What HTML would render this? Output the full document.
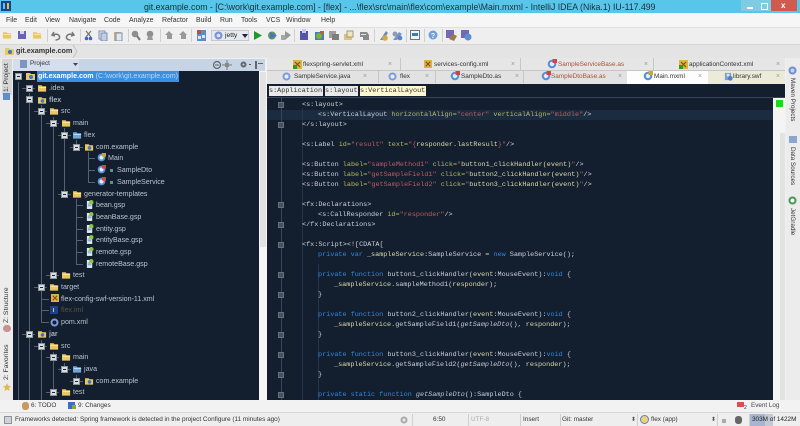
<!DOCTYPE html>
<html><head><meta charset="utf-8">
<style>
html,body{margin:0;padding:0;background:#f0f0f0}
#r{position:relative;width:800px;height:426px;overflow:hidden;background:#f0f0f0;font-family:"Liberation Sans",sans-serif;font-size:7px;color:#222;filter:blur(.3px)}
#r div,#r span.a,#r svg.i{position:absolute}
.t{white-space:pre;line-height:10px}
.m{top:16px;font-size:6.9px;color:#333}
.n{white-space:pre;color:#bcc5ce;font-size:7.1px;line-height:10px;height:10px}
.c{white-space:pre;font-family:"Liberation Mono",monospace;font-size:6.8px;line-height:10px;height:10px;color:#ccd3da;left:0}
.k{color:#2f8ae2}.a1{color:#b4b95c}.v{color:#bd5f5f}.y{color:#dcdcac}.it{font-style:italic;color:#c0c8d0}
.tab{font-size:6.4px;color:#333;white-space:pre;line-height:10px}
.red{color:#a9503c}
.x{color:#999;font-size:7px;line-height:10px}
.vl{background:#56606e;width:1px}
.hl{background:#56606e;height:1px}
.e{width:5px;height:5px;background:#d8dde2;border:1px solid #8a929c}
.e:after{content:"";position:absolute;left:1px;top:2px;width:3px;height:1px;background:#223}
.sp{background:#cfcfcf;width:1px;top:29px;height:13px}
.rot{white-space:pre;font-size:6.8px;color:#333;line-height:9px}
.rr{white-space:pre;font-size:6.3px;color:#333;line-height:9px}
.st{top:415px;font-size:6.4px;color:#333;white-space:pre;line-height:10px}
.sb{background:#cfcfcf;width:1px;top:414px;height:12px}
.fd{width:4px;height:4px;background:#46525f;border:1px solid #66717e}
</style></head><body>
<svg width="0" height="0" style="position:absolute">
<defs>
<symbol id="fo" viewBox="0 0 10 8"><path d="M0 1h4l1 1h4v6H0z" fill="#e9c765"/><path d="M1 3h8v1H1z" fill="#f7e9a8"/></symbol>
<symbol id="fb" viewBox="0 0 10 8"><path d="M0 1h4l1 1h4v6H0z" fill="#6fa8dc"/><path d="M1 3h8v1H1z" fill="#c6e0f6"/></symbol>
<symbol id="fp" viewBox="0 0 10 8"><path d="M0 1h4l1 1h4v6H0z" fill="#e9c765"/><circle cx="5" cy="5" r="2" fill="#3d77c4"/></symbol>
<symbol id="as" viewBox="0 0 10 10"><circle cx="5" cy="5" r="4.3" fill="#5a8fd8"/><circle cx="5" cy="5" r="2.2" fill="#e6eef8"/><rect x="5.5" y="0" width="4.5" height="4" fill="#c8484a"/></symbol>
<symbol id="am" viewBox="0 0 10 10"><circle cx="5" cy="5" r="4.3" fill="#5a8fd8"/><circle cx="5" cy="5" r="2.2" fill="#e6eef8"/><rect x="5.5" y="0" width="4.5" height="4" fill="#c9a63c"/></symbol>
<symbol id="gs" viewBox="0 0 9 10"><path d="M1 1h6v9H1z" fill="#dfeaf5"/><path d="M2 4h4v1H2zM2 6h4v1H2z" fill="#5b8cc0"/><circle cx="6" cy="2.5" r="2.5" fill="#8cc63f"/></symbol>
<symbol id="xm" viewBox="0 0 9 9"><rect width="9" height="9" fill="#d9b44a"/><path d="M2 2l5 5M7 2L2 7" stroke="#8a4a10" stroke-width="1.2"/></symbol>
<symbol id="bl" viewBox="0 0 10 10"><path d="M1 1h7v8H1z" fill="#7f9ed0"/><path d="M3 2h3v3H3z" fill="#d8e4f4"/><circle cx="7" cy="7" r="2.6" fill="#4f7fc0"/></symbol>
</defs></svg>
<div id="r">
<!-- title -->
<div style="left:0;top:0;width:800px;height:13px;background:#58c6ea"></div>
<div style="left:1px;top:1px;width:10px;height:10px;background:#1c3f8e"></div>
<div style="left:3px;top:3px;width:2px;height:6px;background:#58c6ea"></div>
<div style="left:7px;top:3px;width:2px;height:6px;background:#e8c040"></div>
<div class="t" style="left:144px;top:2px;font-size:8.73px;color:#1f2d33">git.example.com - [C:\work\git.example.com] - [flex] - ...\flex\src\main\flex\com\example\Main.mxml - IntelliJ IDEA (Nika.1) IU-117.499</div>
<div style="left:741px;top:0;width:17px;height:11px;background:#7fcbe4"></div>
<div style="left:747px;top:7px;width:6px;height:2px;background:#fff"></div>
<div style="left:758px;top:0;width:13px;height:11px;background:#7fcbe4"></div>
<div style="left:761px;top:3px;width:5px;height:5px;border:1px solid #fff"></div>
<div style="left:771px;top:0;width:26px;height:11px;background:#cf5a50"></div>
<div class="t" style="left:781px;top:1px;font-size:8px;font-weight:bold;color:#fff">x</div>
<!-- menu -->
<div style="left:0;top:13px;width:800px;height:14px;background:#f6f6f6"></div>
<div class="t m" style="left:6px">File</div><div class="t m" style="left:25px">Edit</div><div class="t m" style="left:45px">View</div><div class="t m" style="left:69px">Navigate</div><div class="t m" style="left:104px">Code</div><div class="t m" style="left:129px">Analyze</div><div class="t m" style="left:162px">Refactor</div><div class="t m" style="left:196px">Build</div><div class="t m" style="left:220px">Run</div><div class="t m" style="left:241px">Tools</div><div class="t m" style="left:266px">VCS</div><div class="t m" style="left:286px">Window</div><div class="t m" style="left:321px">Help</div>
<!-- toolbar -->
<div style="left:0;top:27px;width:800px;height:17px;background:#efefef;border-top:1px solid #e0e0e0;box-sizing:border-box"></div>
<svg class="i" style="left:3px;top:31px" width="9" height="8"><use href="#fo"/></svg>
<div style="left:18px;top:31px;width:8px;height:8px;background:#6a60b8"></div><div style="left:20px;top:31px;width:4px;height:3px;background:#d5d2ee"></div>
<svg class="i" style="left:33px;top:31px" width="9" height="8"><use href="#fo"/></svg>
<div class="sp" style="left:47px"></div>
<svg class="i" style="left:51px;top:30px" width="10" height="11"><path d="M3 2L1 5l3 1M1.500 5C6 3 9 5 8.500 8c-.3 1-2 2-4 2" fill="none" stroke="#777" stroke-width="1.500"/></svg>
<svg class="i" style="left:65px;top:30px" width="10" height="11"><path d="M7 2l2 3-3 1M8.500 5C4 3 1 5 1.500 8c.3 1 2 2 4 2" fill="none" stroke="#777" stroke-width="1.500"/></svg>
<div class="sp" style="left:80px"></div>
<svg class="i" style="left:84px;top:30px" width="9" height="11"><path d="M2 1l5 6M7 1L2 7" stroke="#777" stroke-width="1.300"/><circle cx="2.500" cy="8.500" r="1.800" fill="#4a63b8"/><circle cx="6.500" cy="8.500" r="1.800" fill="#4a63b8"/></svg>
<svg class="i" style="left:98px;top:30px" width="10" height="11"><path d="M1 1h6v8H1z" fill="#e9edf4" stroke="#7f8fb0"/><path d="M3 3h6v8H3z" fill="#bfcde8" stroke="#7f8fb0"/></svg>
<svg class="i" style="left:113px;top:30px" width="10" height="11"><path d="M1 2h7v9H1z" fill="#c9b27a"/><path d="M3 3h6v8H3z" fill="#dfe7f4" stroke="#7f8fb0"/></svg>
<div class="sp" style="left:128px"></div>
<svg class="i" style="left:131px;top:30px" width="10" height="11"><circle cx="4" cy="4" r="3.300" fill="#8f8f8f"/><path d="M6 6l3 4" stroke="#777" stroke-width="2"/></svg>
<svg class="i" style="left:145px;top:30px" width="10" height="11"><circle cx="5" cy="4" r="3.300" fill="#8f8f8f"/><path d="M2 10l1-4h4l1 4z" fill="#999"/></svg>
<div class="sp" style="left:160px"></div>
<svg class="i" style="left:164px;top:30px" width="10" height="10"><path d="M5 1L1 5h2v4h5V5h1z" fill="#999"/></svg>
<svg class="i" style="left:178px;top:30px" width="10" height="10"><path d="M5 1L1 5h2v4h5V5h1z" fill="#999"/></svg>
<div class="sp" style="left:191px"></div>
<div style="left:197px;top:30px;width:9px;height:11px;background:#5c8ccc"></div><div style="left:197px;top:30px;width:4px;height:4px;background:#c8483c"></div><div style="left:202px;top:35px;width:3px;height:3px;background:#dce7f4"></div><div style="left:198px;top:36px;width:3px;height:3px;background:#dce7f4"></div>
<div style="left:211px;top:30px;width:38px;height:11px;background:#e6e9ef;border:1px solid #c4c8d0;box-sizing:border-box"></div>
<svg class="i" style="left:214px;top:31px" width="9" height="9"><circle cx="4.500" cy="4.500" r="4" fill="#7d93d6"/><circle cx="4.500" cy="4.500" r="1.800" fill="#dfe5f6"/></svg>
<div class="t" style="left:225px;top:31px;font-size:6.700px">jetty</div>
<svg class="i" style="left:242px;top:34px" width="6" height="4"><path d="M0 0h6L3 4z" fill="#223"/></svg>
<svg class="i" style="left:254px;top:30px" width="8" height="11"><path d="M0 1l8 4.500L0 10z" fill="#1f9a2a"/></svg>
<svg class="i" style="left:267px;top:30px" width="11" height="11"><circle cx="5" cy="5.500" r="4" fill="#5f9e50"/><path d="M3 2l7 3.500L3 9z" fill="#4f74c4"/></svg>
<svg class="i" style="left:281px;top:30px" width="10" height="11"><path d="M0 5h4v5H0z" fill="#a8a8a8"/><path d="M4 1l6 4-6 5z" fill="#999"/></svg>
<div class="sp" style="left:294px"></div>
<div style="left:300px;top:31px;width:8px;height:9px;background:#5656a8"></div><div style="left:302px;top:29px;width:4px;height:4px;background:#c9c9e8"></div>
<svg class="i" style="left:314px;top:30px" width="11" height="11"><rect x="1" y="2" width="9" height="8" fill="#3f7fc8"/><circle cx="5" cy="6" r="3" fill="#82b030"/><rect x="6" y="1" width="4" height="3" fill="#c05c40"/></svg>
<div style="left:329px;top:31px;width:7px;height:7px;background:#9c9c9c"></div><div style="left:332px;top:34px;width:7px;height:6px;background:#7e7e7e"></div>
<svg class="i" style="left:344px;top:30px" width="10" height="11"><path d="M0 4h8v6H0z" fill="#d8c484"/><path d="M3 1h6v6H3z" fill="#efe6c0" stroke="#a69a70"/></svg>
<svg class="i" style="left:359px;top:30px" width="11" height="11"><path d="M1 2h7l2 3v5H4V7H1z" fill="#8a8a8a"/><path d="M2 4h5v1H2z" fill="#e0e0e0"/></svg>
<div class="sp" style="left:374px"></div>
<svg class="i" style="left:378px;top:30px" width="11" height="11"><path d="M2 10L8 1l2 2-5 7z" fill="#6f86b8"/><circle cx="7" cy="8" r="2.800" fill="#d9a83c"/></svg>
<svg class="i" style="left:392px;top:30px" width="11" height="11"><path d="M1 10L7 2l3 2-5 6z" fill="#7c92c4"/><circle cx="3" cy="4" r="2.500" fill="#8f9bb0"/><circle cx="8" cy="8" r="2.300" fill="#5a82c4"/></svg>
<div class="sp" style="left:406px"></div>
<div style="left:410px;top:30px;width:10px;height:10px;background:#f0f4f8;border:1px solid #6a7484;box-sizing:border-box"></div><div style="left:412px;top:33px;width:6px;height:3px;background:#2f7fb8"></div>
<div class="sp" style="left:424px"></div>
<svg class="i" style="left:428px;top:30px" width="10" height="10"><circle cx="5" cy="5" r="4.500" fill="#6fa0dc"/><text x="5" y="8" font-size="7" font-weight="bold" text-anchor="middle" fill="#fff" font-family="Liberation Sans">?</text></svg>
<div class="sp" style="left:442px"></div>
<svg class="i" style="left:446px;top:30px" width="11" height="11"><rect x="0" y="0" width="8" height="8" fill="#7268b4"/><path d="M3 9l4-5 4 2-3 5z" fill="#a07a44"/></svg>
<svg class="i" style="left:461px;top:30px" width="11" height="11"><rect x="0" y="0" width="8" height="8" fill="#7268b4"/><circle cx="7" cy="7" r="3.500" fill="#5a8ed0"/></svg>
<!-- nav -->
<div style="left:0;top:44px;width:800px;height:14px;background:#e4e4e4;border-top:1px solid #d6d6d6;box-sizing:border-box"></div>
<svg class="i" style="left:5px;top:47px" width="10" height="8"><use href="#fp"/></svg>
<div class="t" style="left:16px;top:46px;font-size:7.200px;font-weight:bold;color:#333">git.example.com</div>
<svg class="i" style="left:72px;top:45px" width="6" height="13"><path d="M1 0l4 6.500L1 13" fill="none" stroke="#c4c4c4"/></svg>
<!-- left stripe -->
<div style="left:0;top:58px;width:13px;height:342px;background:#ececec"></div>
<div style="left:2px;top:59px;width:10px;height:36px;background:#d6d6d6"></div>
<div class="rot" style="left:2px;top:63px;width:10px;height:30px"><span style="position:absolute;left:0;top:29px;transform:rotate(-90deg);transform-origin:0 0;">1: Project</span></div>
<div style="left:3px;top:93px;width:7px;height:7px;background:#5a8fd0"></div>
<div class="rot" style="left:2px;top:290px;width:10px;height:33px"><span style="position:absolute;left:0;top:33px;transform:rotate(-90deg);transform-origin:0 0;">Z: Structure</span></div>
<div style="left:3px;top:325px;width:8px;height:7px;background:#c89090;border-radius:4px"></div>
<div class="rot" style="left:2px;top:347px;width:10px;height:33px"><span style="position:absolute;left:0;top:33px;transform:rotate(-90deg);transform-origin:0 0;">2: Favorites</span></div>
<svg class="i" style="left:3px;top:383px" width="8" height="8"><path d="M4 0l1.200 2.800L8 3 6 5l.6 3L4 6.500 1.400 8 2 5 0 3l2.800-.2z" fill="#e0b85a"/></svg>
<!-- project panel header -->
<div style="left:13px;top:59px;width:252px;height:12px;background:#c6d4e6"></div>
<div style="left:13px;top:59px;width:66px;height:12px;background:#d5deea"></div>
<div style="left:20px;top:60px;width:7px;height:8px;background:#7b97bf"></div>
<div class="t" style="left:30px;top:59px;font-size:6.400px;color:#333">Project</div>
<svg class="i" style="left:73px;top:63px" width="5" height="3"><path d="M0 0h5L2.500 3z" fill="#444"/></svg>
<svg class="i" style="left:212px;top:60px" width="10" height="10"><circle cx="5" cy="5" r="3.500" fill="#c6d4e6" stroke="#666" stroke-width="1.200"/><path d="M3 5h4" stroke="#666"/></svg>
<svg class="i" style="left:222px;top:60px" width="10" height="10"><path d="M5 0v10M0 5h10" stroke="#777"/><path d="M3 3h4v4H3z" fill="#888"/></svg>
<svg class="i" style="left:239px;top:60px" width="9" height="9"><circle cx="4.500" cy="4.500" r="3" fill="#666"/><circle cx="4.500" cy="4.500" r="1" fill="#c6d4e6"/></svg>
<div style="left:249px;top:64px;width:2px;height:1px;background:#555"></div>
<div style="left:255px;top:61px;width:2px;height:8px;background:#666"></div><div style="left:258px;top:63px;width:5px;height:1px;background:#666"></div>
<!-- tree -->
<div style="left:13px;top:71px;width:246px;height:329px;background:#131e2e"></div>
<div style="left:259px;top:71px;width:8px;height:329px;background:#f6f6f6"></div>
<div style="left:260px;top:72px;width:6px;height:175px;background:#e3e3e3"></div>
<div class="vl" style="left:18px;top:82px;height:318px"></div>
<div class="vl" style="left:29px;top:93px;height:307px"></div>
<div class="vl" style="left:41px;top:105px;height:217px"></div>
<div class="vl" style="left:41px;top:340px;height:60px"></div>
<div class="vl" style="left:53px;top:117px;height:158px"></div>
<div class="vl" style="left:53px;top:352px;height:40px"></div>
<div class="vl" style="left:64px;top:128px;height:66px"></div>
<div class="vl" style="left:64px;top:363px;height:6px"></div>
<div class="vl" style="left:76px;top:140px;height:7px"></div>
<div class="vl" style="left:76px;top:199px;height:65px"></div>
<div class="vl" style="left:76px;top:375px;height:6px"></div>
<div class="vl" style="left:88px;top:152px;height:30px"></div>
<div class="hl" style="left:22px;top:88px;width:13px"></div>
<div class="hl" style="left:34px;top:111px;width:13px"></div>
<div class="hl" style="left:46px;top:123px;width:13px"></div>
<div class="hl" style="left:58px;top:135px;width:13px"></div>
<div class="hl" style="left:70px;top:147px;width:13px"></div>
<div class="hl" style="left:88px;top:158px;width:7px"></div><div class="hl" style="left:88px;top:170px;width:7px"></div><div class="hl" style="left:88px;top:182px;width:7px"></div>
<div class="hl" style="left:58px;top:194px;width:13px"></div>
<div class="hl" style="left:76px;top:205px;width:7px"></div><div class="hl" style="left:76px;top:217px;width:7px"></div><div class="hl" style="left:76px;top:229px;width:7px"></div><div class="hl" style="left:76px;top:240px;width:7px"></div><div class="hl" style="left:76px;top:252px;width:7px"></div><div class="hl" style="left:76px;top:264px;width:7px"></div>
<div class="hl" style="left:46px;top:275px;width:13px"></div>
<div class="hl" style="left:41px;top:299px;width:8px"></div><div class="hl" style="left:41px;top:310px;width:8px"></div><div class="hl" style="left:41px;top:322px;width:8px"></div>
<div class="hl" style="left:34px;top:287px;width:13px"></div>
<div class="hl" style="left:22px;top:334px;width:13px"></div>
<div class="hl" style="left:34px;top:346px;width:13px"></div>
<div class="hl" style="left:46px;top:357px;width:13px"></div>
<div class="hl" style="left:58px;top:369px;width:13px"></div>
<div class="hl" style="left:70px;top:381px;width:13px"></div>
<div class="hl" style="left:46px;top:392px;width:13px"></div>
<!-- expanders -->
<div class="e" style="left:15px;top:73px"></div><div class="e" style="left:26px;top:85px"></div><div class="e" style="left:26px;top:96px"></div><div class="e" style="left:38px;top:108px"></div><div class="e" style="left:50px;top:120px"></div><div class="e" style="left:61px;top:132px"></div><div class="e" style="left:73px;top:144px"></div><div class="e" style="left:61px;top:191px"></div><div class="e" style="left:50px;top:272px"></div><div class="e" style="left:38px;top:284px"></div><div class="e" style="left:26px;top:331px"></div><div class="e" style="left:38px;top:343px"></div><div class="e" style="left:50px;top:354px"></div><div class="e" style="left:61px;top:366px"></div><div class="e" style="left:73px;top:378px"></div><div class="e" style="left:50px;top:389px"></div>
<!-- folder icons -->
<svg class="i" style="left:26px;top:72px" width="10" height="8"><use href="#fp"/></svg>
<svg class="i" style="left:38px;top:84px" width="9" height="8"><use href="#fo"/></svg>
<svg class="i" style="left:38px;top:96px" width="9" height="8"><use href="#fp"/></svg>
<svg class="i" style="left:50px;top:107px" width="9" height="8"><use href="#fo"/></svg>
<svg class="i" style="left:62px;top:119px" width="9" height="8"><use href="#fo"/></svg>
<svg class="i" style="left:73px;top:131px" width="9" height="8"><use href="#fb"/></svg>
<svg class="i" style="left:85px;top:143px" width="9" height="8"><use href="#fp"/></svg>
<svg class="i" style="left:97px;top:153px" width="9" height="9"><use href="#am"/></svg>
<svg class="i" style="left:97px;top:165px" width="9" height="9"><use href="#as"/></svg>
<svg class="i" style="left:97px;top:177px" width="9" height="9"><use href="#as"/></svg>
<div style="left:110px;top:169px;width:3px;height:3px;background:#4f9a78"></div>
<div style="left:110px;top:181px;width:3px;height:3px;background:#4f9a78"></div>
<svg class="i" style="left:73px;top:190px" width="9" height="8"><use href="#fo"/></svg>
<svg class="i" style="left:86px;top:200px" width="8" height="9"><use href="#gs"/></svg>
<svg class="i" style="left:86px;top:212px" width="8" height="9"><use href="#gs"/></svg>
<svg class="i" style="left:86px;top:224px" width="8" height="9"><use href="#gs"/></svg>
<svg class="i" style="left:86px;top:235px" width="8" height="9"><use href="#gs"/></svg>
<svg class="i" style="left:86px;top:247px" width="8" height="9"><use href="#gs"/></svg>
<svg class="i" style="left:86px;top:259px" width="8" height="9"><use href="#gs"/></svg>
<svg class="i" style="left:62px;top:271px" width="9" height="8"><use href="#fo"/></svg>
<svg class="i" style="left:50px;top:283px" width="9" height="8"><use href="#fo"/></svg>
<svg class="i" style="left:51px;top:294px" width="8" height="8"><use href="#xm"/></svg>
<div style="left:50px;top:306px;width:8px;height:8px;background:#1c3f8e"></div><div style="left:53px;top:308px;width:1px;height:4px;background:#e8c040"></div>
<svg class="i" style="left:50px;top:318px" width="9" height="9"><circle cx="4.500" cy="4.500" r="3" fill="none" stroke="#7d9bdc" stroke-width="2"/></svg>
<svg class="i" style="left:38px;top:330px" width="9" height="8"><use href="#fp"/></svg>
<svg class="i" style="left:50px;top:342px" width="9" height="8"><use href="#fo"/></svg>
<svg class="i" style="left:62px;top:353px" width="9" height="8"><use href="#fo"/></svg>
<svg class="i" style="left:73px;top:365px" width="9" height="8"><use href="#fb"/></svg>
<svg class="i" style="left:85px;top:377px" width="9" height="8"><use href="#fp"/></svg>
<svg class="i" style="left:62px;top:388px" width="9" height="8"><use href="#fo"/></svg>
<!-- tree text -->
<div style="left:37px;top:71px;width:142px;height:11px;background:#3b8fe0"></div>
<div class="n" style="left:38px;top:71px;color:#fff"><b>git.example.com</b> <span style="color:#bcd8f4">(C:\work\git.example.com)</span></div>
<div class="n" style="left:49px;top:83px">.idea</div>
<div class="n" style="left:49px;top:95px"><b style="color:#a8b2bc">flex</b></div>
<div class="n" style="left:61px;top:106px">src</div>
<div class="n" style="left:73px;top:118px">main</div>
<div class="n" style="left:84px;top:130px">flex</div>
<div class="n" style="left:96px;top:142px">com.example</div>
<div class="n" style="left:108px;top:153px">Main</div>
<div class="n" style="left:117px;top:165px">SampleDto</div>
<div class="n" style="left:117px;top:177px">SampleService</div>
<div class="n" style="left:84px;top:189px">generator-templates</div>
<div class="n" style="left:96px;top:200px">bean.gsp</div>
<div class="n" style="left:96px;top:212px">beanBase.gsp</div>
<div class="n" style="left:96px;top:224px">entity.gsp</div>
<div class="n" style="left:96px;top:235px">entityBase.gsp</div>
<div class="n" style="left:96px;top:247px">remote.gsp</div>
<div class="n" style="left:96px;top:259px">remoteBase.gsp</div>
<div class="n" style="left:73px;top:270px">test</div>
<div class="n" style="left:61px;top:282px">target</div>
<div class="n" style="left:61px;top:294px">flex-config-swf-version-11.xml</div>
<div class="n" style="left:61px;top:305px;color:#54563a">flex.iml</div>
<div class="n" style="left:61px;top:317px">pom.xml</div>
<div class="n" style="left:49px;top:329px"><b style="color:#a8b2bc">jar</b></div>
<div class="n" style="left:61px;top:341px">src</div>
<div class="n" style="left:73px;top:352px">main</div>
<div class="n" style="left:84px;top:364px">java</div>
<div class="n" style="left:96px;top:376px">com.example</div>
<div class="n" style="left:73px;top:387px">test</div>
<!-- tabs -->
<div style="left:267px;top:58px;width:518px;height:13px;background:#e6e6e6"></div>
<div style="left:267px;top:71px;width:518px;height:13px;background:#e2e2e2"></div>
<div style="left:627px;top:71px;width:81px;height:13px;background:#fdfdfd"></div>
<div style="left:708px;top:71px;width:77px;height:13px;background:#ebebd8"></div>
<div class="vl" style="background:#c6c6c6;left:400px;top:58px;height:12px"></div><div class="vl" style="background:#c6c6c6;left:520px;top:58px;height:12px"></div><div class="vl" style="background:#c6c6c6;left:653px;top:58px;height:12px"></div>
<div class="vl" style="background:#c6c6c6;left:378px;top:71px;height:12px"></div><div class="vl" style="background:#c6c6c6;left:435px;top:71px;height:12px"></div><div class="vl" style="background:#c6c6c6;left:523px;top:71px;height:12px"></div>
<div class="hl" style="background:#c6c6c6;left:267px;top:70px;width:518px"></div>
<svg class="i" style="left:293px;top:60px" width="9" height="9"><use href="#xm"/></svg><div style="left:293px;top:65px;width:4px;height:4px;background:#2a9a2a"></div>
<div class="tab" style="left:303px;top:60px">flexspring-servlet.xml</div><div class="x" style="left:388px;top:60px">×</div>
<svg class="i" style="left:424px;top:60px" width="8" height="8"><use href="#xm"/></svg>
<div class="tab" style="left:434px;top:60px">services-config.xml</div><div class="x" style="left:511px;top:60px">×</div>
<svg class="i" style="left:547px;top:59px" width="10" height="10"><use href="#as"/></svg>
<div class="tab red" style="left:558px;top:60px">SampleServiceBase.as</div><div class="x" style="left:644px;top:60px">×</div>
<svg class="i" style="left:679px;top:60px" width="9" height="9"><use href="#xm"/></svg><div style="left:679px;top:65px;width:4px;height:4px;background:#2a9a2a"></div>
<div class="tab" style="left:689px;top:60px">applicationContext.xml</div><div class="x" style="left:776px;top:60px">×</div>
<svg class="i" style="left:282px;top:72px" width="9" height="9"><circle cx="4.500" cy="4.500" r="4" fill="#7d9bdc"/><circle cx="4.500" cy="4.500" r="2" fill="#e6eef8"/></svg>
<div class="tab" style="left:294px;top:72px">SampleService.java</div><div class="x" style="left:363px;top:72px">×</div>
<svg class="i" style="left:388px;top:72px" width="9" height="9"><circle cx="4.500" cy="4.500" r="4" fill="#7d9bdc"/><circle cx="4.500" cy="4.500" r="2" fill="#e6eef8"/></svg>
<div class="tab" style="left:400px;top:72px">flex</div><div class="x" style="left:425px;top:72px">×</div>
<svg class="i" style="left:450px;top:71px" width="10" height="10"><use href="#as"/></svg>
<div class="tab" style="left:461px;top:72px">SampleDto.as</div><div class="x" style="left:515px;top:72px">×</div>
<svg class="i" style="left:541px;top:71px" width="10" height="10"><use href="#as"/></svg>
<div class="tab red" style="left:551px;top:72px">SampleDtoBase.as</div><div class="x" style="left:618px;top:72px">×</div>
<svg class="i" style="left:643px;top:71px" width="10" height="10"><use href="#am"/></svg>
<div class="tab" style="left:654px;top:72px">Main.mxml</div><div class="x" style="left:698px;top:72px">×</div>
<svg class="i" style="left:724px;top:72px" width="9" height="9"><use href="#bl"/></svg>
<div class="tab" style="left:733px;top:72px">library.swf</div><div class="x" style="left:776px;top:72px">×</div>
<!-- breadcrumb -->
<div style="left:267px;top:84px;width:518px;height:14px;background:#131e2e;border-bottom:1px solid #3a4656;box-sizing:border-box"></div>
<div style="left:269px;top:86px;width:54px;height:10px;background:#e9e9e9"></div>
<div style="left:325px;top:86px;width:33px;height:10px;background:#e9e9e9"></div>
<div style="left:360px;top:86px;width:66px;height:10px;background:#fff7cf"></div>
<div class="c" style="left:269px;top:86px;color:#333">s:Application</div>
<div class="c" style="left:325px;top:86px;color:#333">s:layout</div>
<div class="c" style="left:360px;top:86px;color:#333">s:VerticalLayout</div>
<!-- editor -->
<div style="left:267px;top:98px;width:506px;height:302px;background:#131e2e"></div>
<div style="left:267px;top:110px;width:506px;height:10px;background:#1b2b40"></div>
<div class="vl" style="left:281px;top:98px;height:302px;background:#3a4656"></div>
<div class="vl" style="left:302px;top:108px;height:292px;background:#27344a"></div>
<div class="vl" style="left:318px;top:264px;height:136px;background:#27344a"></div>
<div style="left:773px;top:98px;width:12px;height:302px;background:#f4f4f4"></div>
<div style="left:780px;top:133px;width:5px;height:267px;background:#e3e3e3"></div>
<div style="left:776px;top:100px;width:7px;height:7px;background:#19dc19"></div>
<div style="left:786px;top:58px;width:14px;height:342px;background:#ececec"></div>
<!-- fold marks -->
<div class="fd" style="left:278px;top:102px"></div><div class="fd" style="left:278px;top:122px"></div>
<div class="fd" style="left:278px;top:202px"></div><div class="fd" style="left:278px;top:222px"></div>
<div class="fd" style="left:278px;top:242px"></div>
<div class="fd" style="left:278px;top:272px"></div><div class="fd" style="left:278px;top:292px"></div>
<div class="fd" style="left:278px;top:312px"></div><div class="fd" style="left:278px;top:332px"></div>
<div class="fd" style="left:278px;top:352px"></div><div class="fd" style="left:278px;top:372px"></div>
<div class="fd" style="left:278px;top:392px"></div>
<!-- code -->
<div class="c" style="left:302px;top:100px">&lt;s:layout&gt;</div>
<div class="c" style="left:318px;top:110px">&lt;s:VerticalLayout <span class="a1">horizontalAlign=</span><span class="v">"center"</span> <span class="a1">verticalAlign=</span><span class="v">"middle"</span>/&gt;</div>
<div class="c" style="left:302px;top:120px">&lt;/s:layout&gt;</div>
<div class="c" style="left:302px;top:140px">&lt;s:Label <span class="a1">id=</span><span class="v">"result"</span> <span class="a1">text=</span><span class="v">"{</span><span class="y">responder.lastResult</span><span class="v">}"</span>/&gt;</div>
<div class="c" style="left:302px;top:160px">&lt;s:Button <span class="a1">label=</span><span class="v">"sampleMethod1"</span> <span class="a1">click=</span><span class="v">"</span><span class="y">button1_clickHandler(event)</span><span class="v">"</span>/&gt;</div>
<div class="c" style="left:302px;top:170px">&lt;s:Button <span class="a1">label=</span><span class="v">"getSampleField1"</span> <span class="a1">click=</span><span class="v">"</span><span class="y">button2_clickHandler(event)</span><span class="v">"</span>/&gt;</div>
<div class="c" style="left:302px;top:180px">&lt;s:Button <span class="a1">label=</span><span class="v">"getSampleField2"</span> <span class="a1">click=</span><span class="v">"</span><span class="y">button3_clickHandler(event)</span><span class="v">"</span>/&gt;</div>
<div class="c" style="left:302px;top:200px">&lt;fx:Declarations&gt;</div>
<div class="c" style="left:318px;top:210px">&lt;s:CallResponder <span class="a1">id=</span><span class="v">"responder"</span>/&gt;</div>
<div class="c" style="left:302px;top:220px">&lt;/fx:Declarations&gt;</div>
<div class="c" style="left:302px;top:240px">&lt;fx:Script&gt;&lt;![CDATA[</div>
<div class="c" style="left:318px;top:250px"><span class="k">private var</span> <span class="y">_sampleService</span>:SampleService = <span class="k">new</span> SampleService();</div>
<div class="c" style="left:318px;top:270px"><span class="k">private function</span> button1_clickHandler(<span class="y">event</span>:MouseEvent):<span class="k">void</span> {</div>
<div class="c" style="left:334px;top:280px"><span class="y">_sampleService</span>.sampleMethod1(<span class="y">responder</span>);</div>
<div class="c" style="left:318px;top:290px">}</div>
<div class="c" style="left:318px;top:310px"><span class="k">private function</span> button2_clickHandler(<span class="y">event</span>:MouseEvent):<span class="k">void</span> {</div>
<div class="c" style="left:334px;top:320px"><span class="y">_sampleService</span>.getSampleField1(<span class="it">getSampleDto</span>(), <span class="y">responder</span>);</div>
<div class="c" style="left:318px;top:330px">}</div>
<div class="c" style="left:318px;top:350px"><span class="k">private function</span> button3_clickHandler(<span class="y">event</span>:MouseEvent):<span class="k">void</span> {</div>
<div class="c" style="left:334px;top:360px"><span class="y">_sampleService</span>.getSampleField2(<span class="it">getSampleDto</span>(), <span class="y">responder</span>);</div>
<div class="c" style="left:318px;top:370px">}</div>
<div class="c" style="left:318px;top:390px"><span class="k">private static function</span> <span class="it">getSampleDto</span>():SampleDto {</div>
<!-- right stripe -->
<svg class="i" style="left:788px;top:66px" width="9" height="9"><circle cx="4.500" cy="4.500" r="3" fill="#c8d4ee" stroke="#6f8fd0" stroke-width="2"/></svg>
<div class="rr" style="left:788px;top:78px;width:10px;height:42px"><span style="position:absolute;left:9px;top:0;transform:rotate(90deg);transform-origin:0 0;">Maven Projects</span></div>
<div style="left:789px;top:136px;width:8px;height:7px;background:#8aa6cc"></div>
<div class="rr" style="left:788px;top:147px;width:10px;height:38px"><span style="position:absolute;left:9px;top:0;transform:rotate(90deg);transform-origin:0 0;">Data Sources</span></div>
<svg class="i" style="left:788px;top:196px" width="9" height="9"><circle cx="4.500" cy="4.500" r="3" fill="#fff" stroke="#3f9a4a" stroke-width="2"/></svg>
<div class="rr" style="left:788px;top:208px;width:10px;height:30px"><span style="position:absolute;left:9px;top:0;transform:rotate(90deg);transform-origin:0 0;">JetGradle</span></div>
<!-- bottom tool bar -->
<div style="left:0;top:400px;width:800px;height:13px;background:#f2f2f2;border-bottom:1px solid #d8d8d8;box-sizing:border-box"></div>
<div style="left:22px;top:402px;width:7px;height:8px;background:#c79a60;border-radius:3px"></div>
<div class="t" style="left:31px;top:401px;font-size:6.400px;color:#333">6: TODO</div>
<div style="left:68px;top:402px;width:7px;height:7px;background:#3b6fc0"></div><div style="left:72px;top:405px;width:4px;height:4px;background:#8aaa30"></div>
<div class="t" style="left:78px;top:401px;font-size:6.400px;color:#333">9: Changes</div>
<div style="left:737px;top:402px;width:7px;height:5px;background:#d85050"></div><div class="t" style="left:744px;top:403px;font-size:5px;color:#333">2</div>
<div class="t" style="left:751px;top:401px;font-size:6.300px;color:#444">Event Log</div>
<!-- status bar -->
<div style="left:0;top:413px;width:800px;height:13px;background:#eeeeee"></div>
<div style="left:4px;top:416px;width:6px;height:6px;background:#cfd2d6;border:1px solid #8e9298"></div>
<div class="st" style="left:15px">Frameworks detected: Spring framework is detected in the project Configure (11 minutes ago)</div>
<svg class="i" style="left:400px;top:416px" width="8" height="8"><circle cx="4" cy="4" r="2.500" fill="none" stroke="#aaa" stroke-width="2"/></svg>
<div class="sb" style="left:412px"></div>
<div class="st" style="left:433px">6:50</div>
<div class="sb" style="left:468px"></div>
<div class="st" style="left:471px;color:#aaa">UTF-8</div>
<div class="sb" style="left:520px"></div>
<div class="st" style="left:523px">Insert</div>
<div class="sb" style="left:560px"></div>
<div class="st" style="left:562px">Git: master</div>
<div class="t" style="left:631px;top:415px;font-size:6px;color:#555">⬍</div>
<div class="sb" style="left:637px"></div>
<svg class="i" style="left:640px;top:415px" width="9" height="10"><circle cx="4.500" cy="4.500" r="4" fill="#eed27a" stroke="#5a80c0"/></svg>
<div class="st" style="left:651px">flex (app)</div>
<div class="t" style="left:711px;top:415px;font-size:6px;color:#555">⬍</div>
<div class="sb" style="left:717px"></div>
<div style="left:722px;top:419px;width:4px;height:4px;background:#aaa"></div>
<div style="left:735px;top:416px;width:7px;height:8px;background:#666;border-radius:3px"></div>
<div class="sb" style="left:749px"></div>
<div style="left:750px;top:414px;width:15px;height:12px;background:#a6b6d0"></div>
<div style="left:765px;top:414px;width:8px;height:12px;background:#c4cad4"></div>
<div class="st" style="left:752px;color:#222">303M of 1422M</div>
</div>
</body></html>
